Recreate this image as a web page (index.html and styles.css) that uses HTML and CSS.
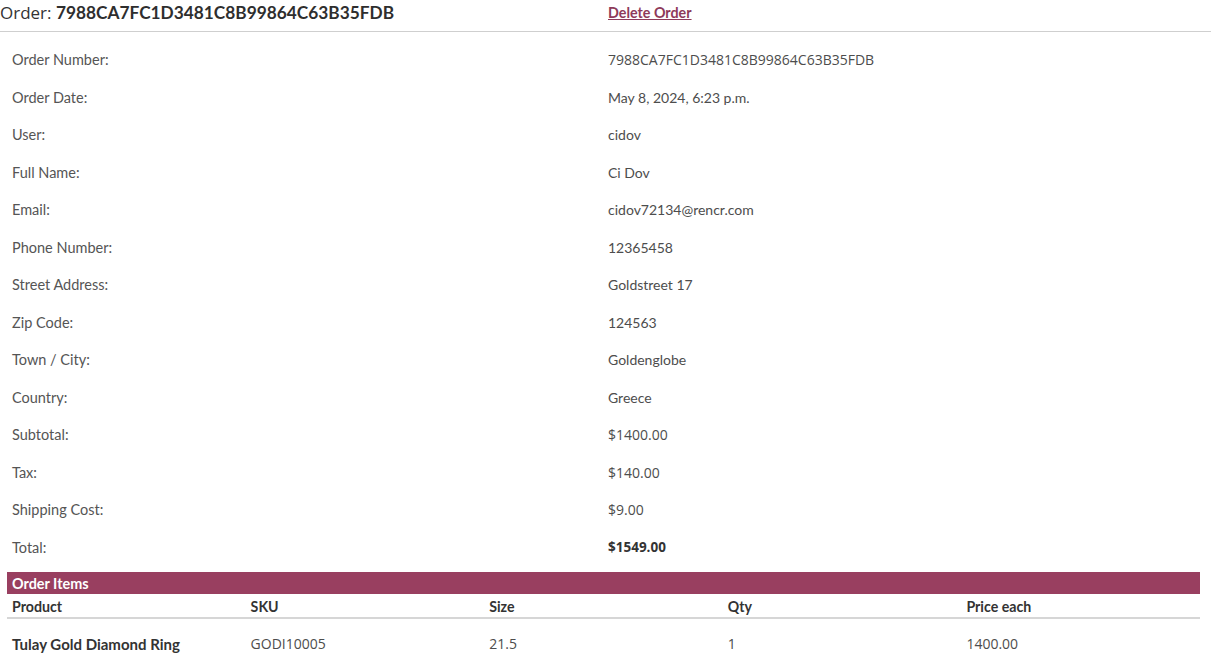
FILE: index.html
```html
<!DOCTYPE html>
<html>
<head>
<meta charset="utf-8">
<link rel="stylesheet" href="styles.css">
</head>
<body>
<div class="page">
  <div class="head">
    <h1 class="title">Order: <b>7988CA7FC1D3481C8B99864C63B35FDB</b></h1>
    <a class="delete" href="#">Delete Order</a>
  </div>
  <table class="details">
    <colgroup><col class="c1"><col class="c2"></colgroup>
    <tr><td class="lbl">Order Number:</td><td class="val num">7988CA7FC1D3481C8B99864C63B35FDB</td></tr>
    <tr><td class="lbl">Order Date:</td><td class="val">May 8, 2024, 6:23 p.m.</td></tr>
    <tr><td class="lbl">User:</td><td class="val">cidov</td></tr>
    <tr><td class="lbl">Full Name:</td><td class="val">Ci Dov</td></tr>
    <tr><td class="lbl">Email:</td><td class="val">cidov72134@rencr.com</td></tr>
    <tr><td class="lbl">Phone Number:</td><td class="val">12365458</td></tr>
    <tr><td class="lbl">Street Address:</td><td class="val">Goldstreet 17</td></tr>
    <tr><td class="lbl">Zip Code:</td><td class="val">124563</td></tr>
    <tr><td class="lbl">Town / City:</td><td class="val">Goldenglobe</td></tr>
    <tr><td class="lbl">Country:</td><td class="val">Greece</td></tr>
    <tr><td class="lbl">Subtotal:</td><td class="val num">$1400.00</td></tr>
    <tr><td class="lbl">Tax:</td><td class="val num">$140.00</td></tr>
    <tr><td class="lbl">Shipping Cost:</td><td class="val num">$9.00</td></tr>
    <tr><td class="lbl">Total:</td><td class="val num strong">$1549.00</td></tr>
  </table>
  <table class="items">
    <thead>
      <tr class="bar"><th colspan="5">Order Items</th></tr>
      <tr class="cols"><th>Product</th><th>SKU</th><th>Size</th><th>Qty</th><th>Price each</th></tr>
    </thead>
    <tbody>
      <tr><td class="pname">Tulay Gold Diamond Ring</td><td class="num">GODI10005</td><td class="num">21.5</td><td class="num">1</td><td class="num">1400.00</td></tr>
    </tbody>
  </table>
</div>
</body>
</html>
```

FILE: styles.css
```css
html, body {
  margin: 0;
  padding: 0;
  background: #fff;
}
body {
  font-family: "Lato", "Noto Sans", sans-serif;
  color: #4a4a4a;
  font-size: 14px;
}
.page {
  width: 1211px;
}
.head {
  display: grid;
  grid-template-columns: 608px 1fr;
  align-items: center;
  height: 31px;
  border-bottom: 1px solid #cfcfcf;
}
.title {
  margin: 0;
  font-family: "Open Sans", sans-serif;
  font-weight: 400;
  font-size: 17px;
  color: #333;
  position: relative;
  top: -3px;
}
.title b {
  font-family: "Lato", sans-serif;
  font-weight: 700;
  font-size: 17.3px;
  color: #2e2e2e;
}
.delete {
  color: #8e3a5a;
  font-weight: 700;
  font-size: 14.3px;
  text-decoration: underline;
  position: relative;
  top: -3px;
}
.details {
  margin: 9px 7px 0;
  width: 1193px;
  border-collapse: collapse;
  table-layout: fixed;
}
.details col.c1 {
  width: 596px;
}
.details td {
  height: 37.5px;
  padding: 0 5px;
  vertical-align: middle;
}
.details td.lbl {
  color: #555;
  font-size: 14.5px;
}
.val {
  color: #4d4d4d;
}
.num {
  font-family: "Open Sans", sans-serif;
  font-size: 14px;
}
.strong {
  font-weight: 700;
  color: #333;
  font-size: 13.5px;
}
.items {
  margin: 6px 7px 0;
  width: 1193px;
  border-collapse: collapse;
  table-layout: fixed;
}
.items .bar th {
  background: #993f60;
  color: #fff;
  text-align: left;
  font-weight: 700;
  font-size: 14.4px;
  height: 22px;
  padding: 0 5px;
}
.items .cols th {
  text-align: left;
  font-weight: 700;
  font-size: 14.2px;
  color: #333;
  height: 22px;
  padding: 1px 5px 0;
  border-bottom: 2px solid #d6d6d6;
}
.items td {
  padding: 15px 5px 10px;
  color: #4d4d4d;
}
.items td.pname {
  font-weight: 700;
  font-size: 15px;
  color: #333;
}
```
